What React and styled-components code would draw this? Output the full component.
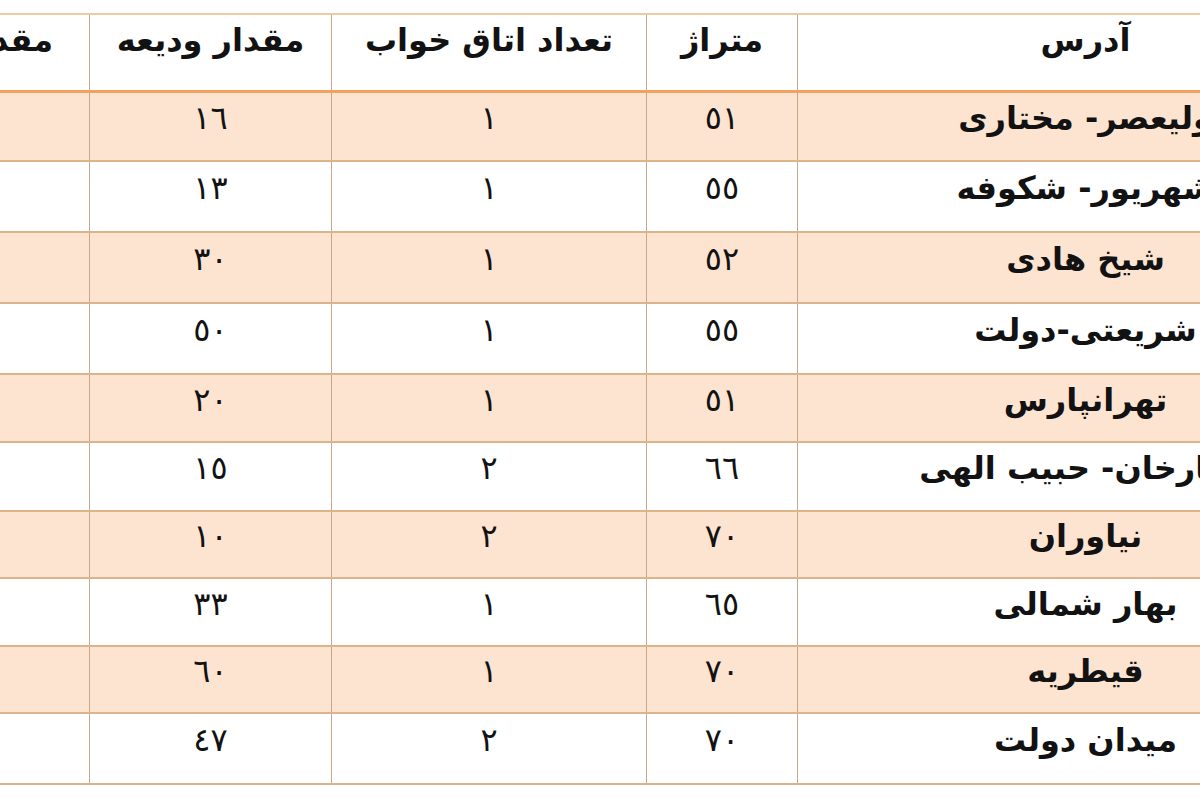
import React from "react";
import styled, { createGlobalStyle } from "styled-components";

const Global = createGlobalStyle`
  html, body { margin: 0; padding: 0; background: #ffffff; overflow: hidden; }
  body { width: 1200px; height: 800px; font-family: "DejaVu Sans", "Noto Sans", sans-serif; }
`;

const Page = styled.div`
  width: 1200px;
  height: 800px;
  overflow: hidden;
  padding-top: 13px;
  box-sizing: border-box;
`;

const Table = styled.table`
  direction: rtl;
  border-collapse: collapse;
  table-layout: fixed;
  width: 1542px;
  margin-left: -169px;
  color: #121212;
`;

const HeadRow = styled.tr`
  height: 77px;
  border-top: 2px solid #f1c9a3;
  border-bottom: 3px solid #f0a261;
`;

const HeadCell = styled.th`
  font-weight: bold;
  font-size: 32px;
  line-height: 38px;
  vertical-align: top;
  padding: 6px 6px 0;
  text-align: center;
  border-left: 1.5px solid #c9a78c;
  border-right: 1.5px solid #c9a78c;
  white-space: nowrap;
  overflow: hidden;
`;

const Row = styled.tr`
  background: ${(p) => (p.$shade ? "#fde4d1" : "#ffffff")};
  border-bottom: 2px solid #dcb38d;
`;

const Cell = styled.td`
  text-align: center;
  vertical-align: middle;
  padding: 0 6px 17px;
  line-height: 38px;
  border-left: 1.5px solid #c9a78c;
  border-right: 1.5px solid #c9a78c;
  white-space: nowrap;
  overflow: hidden;
  font-size: 32px;
  font-weight: ${(p) => (p.$address ? "bold" : "normal")};
`;

const widths = [576, 151, 315, 242, 258];

const rows = [
  { a: "ولیعصر- مختاری", m: "٥١", b: "١", d: "١٦", h: 70 },
  { a: "شهریور- شکوفه", m: "٥٥", b: "١", d: "١٣", h: 71 },
  { a: "شیخ هادی", m: "٥٢", b: "١", d: "٣٠", h: 71 },
  { a: "شریعتی-دولت", m: "٥٥", b: "١", d: "٥٠", h: 71 },
  { a: "تهرانپارس", m: "٥١", b: "١", d: "٢٠", h: 68 },
  { a: "ستارخان- حبیب الهی", m: "٦٦", b: "٢", d: "١٥", h: 69 },
  { a: "نیاوران", m: "٧٠", b: "٢", d: "١٠", h: 67 },
  { a: "بهار شمالی", m: "٦٥", b: "١", d: "٣٣", h: 68 },
  { a: "قیطریه", m: "٧٠", b: "١", d: "٦٠", h: 67 },
  { a: "میدان دولت", m: "٧٠", b: "٢", d: "٤٧", h: 71 },
];

export default function App() {
  return (
    <Page>
      <Global />
      <Table>
        <colgroup>
          {widths.map((w, i) => (
            <col key={i} style={{ width: w }} />
          ))}
        </colgroup>
        <thead>
          <HeadRow>
            <HeadCell>آدرس</HeadCell>
            <HeadCell>متراژ</HeadCell>
            <HeadCell>تعداد اتاق خواب</HeadCell>
            <HeadCell>مقدار ودیعه</HeadCell>
            <HeadCell>مقدار اجاره</HeadCell>
          </HeadRow>
        </thead>
        <tbody>
          {rows.map((r, i) => (
            <Row key={i} $shade={i % 2 === 0} style={{ height: r.h }}>
              <Cell $address>{r.a}</Cell>
              <Cell>{r.m}</Cell>
              <Cell>{r.b}</Cell>
              <Cell>{r.d}</Cell>
              <Cell></Cell>
            </Row>
          ))}
        </tbody>
      </Table>
    </Page>
  );
}
